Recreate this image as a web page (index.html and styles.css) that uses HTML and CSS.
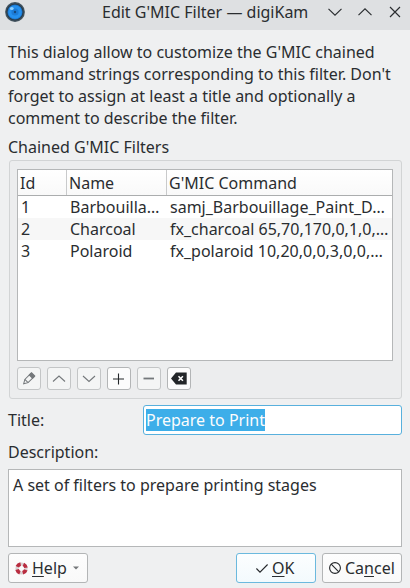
FILE: index.html
```html
<!DOCTYPE html>
<html lang="en">
<head>
<meta charset="utf-8">
<title>Edit G'MIC Filter — digiKam</title>
<link rel="stylesheet" href="styles.css">
</head>
<body>
<div class="dialog">
  <header class="titlebar">
    <svg class="app-icon" width="20" height="20" viewBox="0 0 20 20">
      <circle cx="10" cy="10" r="9.9" fill="#42535f"/>
      <circle cx="10" cy="10" r="8.600" fill="#2b3a45"/>
      <circle cx="10" cy="10" r="7.600" fill="#1b6fc0"/>
      <circle cx="10" cy="10" r="6.800" fill="#2590ee"/>
      <circle cx="10" cy="10" r="3.600" fill="#1c7bd6"/>
      <circle cx="10" cy="10" r="1.200" fill="#15477c"/>
      <ellipse cx="6.800" cy="6.600" rx="1.900" ry="1.500" fill="#8fd0ff"/>
    </svg>
    <h1>Edit G'MIC Filter — digiKam</h1>
    <div class="controls">
      <svg width="14" height="14" viewBox="0 0 14 14"><path d="M.5 3.800 7 10.200l6.500-6.400"/></svg>
      <svg width="14" height="14" viewBox="0 0 14 14"><path d="M.5 10.200 7 3.800l6.500 6.400"/></svg>
      <svg width="14" height="14" viewBox="0 0 14 14"><path d="M2 2l10 10M12 2 2 12"/></svg>
    </div>
  </header>
  <main>
    <p class="intro">This dialog allow to customize the G'MIC chained<br>command strings corresponding to this filter. Don't<br>forget to assign at least a title and optionally a<br>comment to describe the filter.</p>
    <h2>Chained G'MIC Filters</h2>
    <section class="group">
      <div class="table">
        <div class="row head"><span>Id</span><span>Name</span><span>G'MIC Command</span></div>
        <div class="row"><span>1</span><span>Barbouilla…</span><span>samj_Barbouillage_Paint_D…</span></div>
        <div class="row alt"><span>2</span><span>Charcoal</span><span>fx_charcoal 65,70,170,0,1,0,…</span></div>
        <div class="row"><span>3</span><span>Polaroid</span><span>fx_polaroid 10,20,0,0,3,0,0,…</span></div>
      </div>
      <div class="tools">
        <button class="tool off" aria-label="Edit"><svg width="16" height="16" viewBox="0 0 16 16"><g transform="translate(7.600 7.900) rotate(45)" fill="none" stroke="#74787b" stroke-width="1"><path d="M-2.300-5.500v8.500L0 7 2.300 3v-8.500z"/><path d="M-2.300-6.500h4.600v3.200h-4.600z" fill="#74787b"/><path d="M-2.300 3h4.600"/></g></svg></button>
        <button class="tool off" aria-label="Up"><svg width="16" height="16" viewBox="0 0 16 16"><path class="line" d="M2 10.500 8 5l6 5.500"/></svg></button>
        <button class="tool off" aria-label="Down"><svg width="16" height="16" viewBox="0 0 16 16"><path class="line" d="M2 5 8 10.500l6-5.500"/></svg></button>
        <button class="tool" aria-label="Add"><svg width="16" height="16" viewBox="0 0 16 16"><path d="M2 8h11M7.500 2.500v11" fill="none" stroke="#232629" stroke-width="1.100"/></svg></button>
        <button class="tool off" aria-label="Remove"><svg width="16" height="16" viewBox="0 0 16 16"><path d="M2.500 7.500h10.500" stroke="#74787b" stroke-width="1.800"/></svg></button>
        <button class="tool" aria-label="Clear"><svg width="16" height="16" viewBox="0 0 16 16"><path d="M0 7.500 5 1.500h10.700v12H5z" fill="#232629"/><path d="m7.500 5.300 4.400 4.400m0-4.400-4.400 4.400" stroke="#fff" stroke-width="1.600"/></svg></button>
      </div>
    </section>
    <div class="field"><span>Title:</span><div class="input"><span class="selected">Prepare to Print</span></div></div>
    <div class="desc-label">Description:</div>
    <div class="textarea">A set of filters to prepare printing stages</div>
    <footer>
      <button class="btn help">
        <svg width="13" height="13" viewBox="0 0 13 13"><circle cx="6.500" cy="6.500" r="4.500" fill="none" stroke="#d8cfd1" stroke-width="3.200"/><circle cx="6.500" cy="6.500" r="4.500" fill="none" stroke="#b92d40" stroke-width="3.700" stroke-dasharray="4.200 2.869" stroke-dashoffset="-1.430"/></svg>
        <span><u>H</u>elp</span>
        <svg class="caret" width="6" height="4" viewBox="0 0 6 4"><path d="M0 .4h6L3 3.600z" fill="#747779"/></svg>
      </button>
      <button class="btn ok">
        <svg width="12" height="12" viewBox="0 0 12 12"><path d="m.4 6.500 3.600 3.600 7.600-7.600" fill="none" stroke="#232629" stroke-width="1.100"/></svg>
        <span><u>O</u>K</span>
      </button>
      <button class="btn cancel">
        <svg width="12" height="12" viewBox="0 0 12 12"><g fill="none" stroke="#232629" stroke-width="1.100"><circle cx="6" cy="6" r="5.400"/><path d="m2.200 2.200 7.600 7.600"/></g></svg>
        <span>Ca<u>n</u>cel</span>
      </button>
    </footer>
  </main>
</div>
</body>
</html>
```
FILE: styles.css
```css
* { box-sizing: border-box; }
body { margin: 0; overflow: hidden; }
.dialog {
  width: 410px;
  height: 588px;
  background: #eff0f1;
  color: #2a2d30;
  font: 16px/22px "Noto Sans", sans-serif;
}
h1, h2, p { margin: 0; font-size: 16px; font-weight: 400; }
.titlebar {
  display: flex;
  height: 30px;
  padding: 2px 8px 0 5px;
  background: #dee0e2;
}
.app-icon { flex: none; }
h1 { flex: 1; height: 22px; margin-top: -1px; padding-left: 77px; white-space: nowrap; }
.controls { display: flex; gap: 16px; padding-top: 3px; }
.controls path { fill: none; stroke: #2a2d30; stroke-width: 1.15; }
main { padding: 11px 8px 0; }
.intro { white-space: nowrap; }
h2 { margin-top: 7px; }
.group {
  height: 239px;
  margin: 2px 0 0 1px;
  padding: 8px 8px 0 7px;
  border: 1px solid #d2d4d5;
  border-radius: 3px;
  background: #ecedee;
}
.table { height: 192px; border: 1px solid #b5b7b8; background: #fff; overflow: hidden; }
.row { display: grid; grid-template-columns: 49px 100px 1fr; white-space: nowrap; height: 22px; }
.row span { padding-left: 3px; }
.head { height: 26px; border-bottom: 1px solid #abadae; background: linear-gradient(#fff, #f9f9f9); }
.head span { padding: 2px 0 0 2px; border-right: 1px solid #c9cacb; }
.head span:last-child { border-right: 0; }
.alt { background: #f7f7f7; }
.tools { display: flex; gap: 6px; margin-top: 6px; }
button { font: inherit; color: inherit; margin: 0; padding: 0; }
.tool {
  display: flex;
  align-items: center;
  justify-content: center;
  width: 24px;
  height: 23px;
  border: 1px solid #b3b5b6;
  border-radius: 3px;
  background: #fcfcfc;
}
.off { border-color: #c3c5c6; background: #f4f5f5; }
.line { fill: none; stroke: #74787b; stroke-width: 1.1; }
.field { display: flex; align-items: center; justify-content: space-between; margin-top: 6px; height: 30px; }
.input {
  width: 259px;
  height: 30px;
  padding: 3px 2px;
  border: 1px solid #58b0dd;
  border-radius: 3px;
  background: #fff;
}
.selected { display: inline-block; height: 22px; background: #3daee9; color: #fcfcfc; }
.desc-label { margin-top: 6px; }
.textarea {
  height: 78px;
  margin-top: 6px;
  padding: 4px;
  border: 1px solid #b5b7b8;
  background: #fff;
}
footer { display: flex; gap: 6px; margin-top: 6px; }
.btn {
  display: flex;
  align-items: center;
  width: 80px;
  height: 30px;
  border: 1px solid #b3b5b6;
  border-radius: 3px;
  background: linear-gradient(#fdfdfd, #f9f9f9);
}
.btn span { white-space: nowrap; }
.btn u { text-decoration-thickness: 1px; text-underline-offset: 2px; text-decoration-skip-ink: none; }
.help { margin-right: auto; padding-left: 6px; gap: 4px; }
.caret { margin-left: 2px; }
.ok { padding-left: 19px; gap: 4px; border-color: #6bb9de; background: linear-gradient(#fcfeff, #f3fafd); }
.cancel { padding-left: 6px; gap: 4px; }
```
